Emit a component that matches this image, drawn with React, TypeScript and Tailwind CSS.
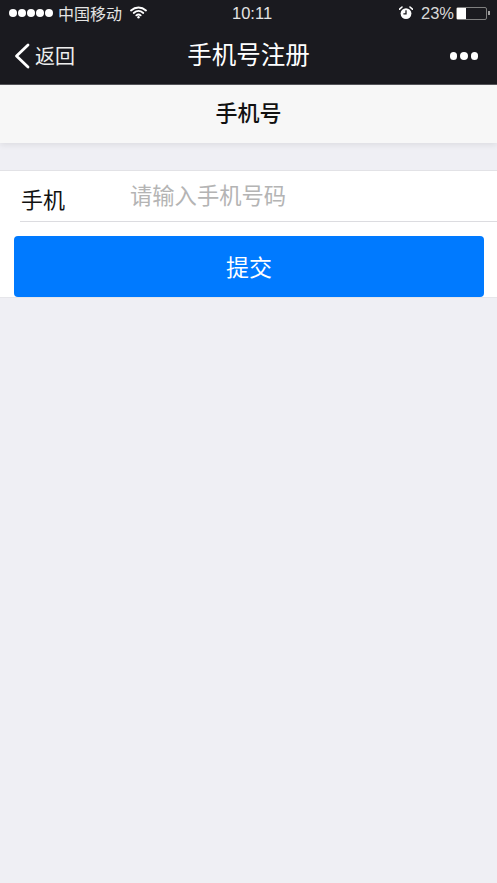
export default function App() {
  const font = "[font-family:'Noto_Sans_CJK_SC','Liberation_Sans',sans-serif]";
  return (
    <div className={`w-[497px] h-[883px] flex flex-col overflow-hidden bg-[#efeff4] ${font}`}>
      <header className="h-[85px] bg-[#1a1a1f] text-white flex flex-col shrink-0 border-b border-[#55555a]">
        <div className="h-[28px] relative flex items-center justify-between pl-[9px] pr-[7px] text-[#e4e4e4]">
          <div className="flex items-center -mt-[2px]">
            <div className="flex gap-[1px]">
              {[0, 1, 2, 3, 4].map((i) => (
                <span key={i} className="w-[8px] h-[8px] rounded-full bg-white" />
              ))}
            </div>
            <span className="ml-[5px] text-[16px] leading-[20px]">中国移动</span>
            <svg className="ml-[8px] -mt-[2px]" width="17" height="13" viewBox="0 0 17 13" fill="none" stroke="white" strokeLinecap="round">
              <path d="M1 4.5C5.5 .5 11.5 .5 16 4.5" strokeWidth="1.8" />
              <path d="M3.7 7C6.7 4.4 10.3 4.4 13.3 7" strokeWidth="1.8" />
              <path d="M6.3 9.4C7.6 8.3 9.4 8.3 10.7 9.4" strokeWidth="1.8" />
              <circle cx="8.5" cy="11.3" r="1.2" fill="white" stroke="none" />
            </svg>
          </div>
          <span className="absolute left-[232px] top-[2px] text-[16.5px] leading-[22px] font-['Liberation_Sans',sans-serif]">10:11</span>
          <div className="flex items-center -mt-[2px]">
            <svg width="14" height="14" viewBox="0 0 14 14" className="mr-[8px]">
              <circle cx="7" cy="7.6" r="5.4" fill="white" />
              <path d="M7 4.3V7.8H4.4" fill="none" stroke="#1a1a1f" strokeWidth="1.3" />
              <path d="M.6 3.2 3 1M13.4 3.2 11 1" stroke="white" strokeWidth="1.6" strokeLinecap="round" />
            </svg>
            <span className="text-[16.5px] leading-[20px] font-['Liberation_Sans',sans-serif] text-[#d8d8d8] mr-[2px]">23%</span>
            <div className="w-[31px] h-[13px] border border-[#808080] rounded-[2px]">
              <div className="h-full w-[9px] bg-white" />
            </div>
            <span className="w-[2px] h-[4px] bg-[#a0a0a0] ml-[1px]" />
          </div>
        </div>
        <nav className="h-[56px] relative flex items-center justify-between pl-[14px] pr-[19px]">
          <div className="flex items-center">
            <svg width="16" height="26" viewBox="0 0 16 26" fill="none" stroke="white" strokeWidth="2.8" strokeLinecap="round" strokeLinejoin="round">
              <path d="M14 2 2.5 13 14 24" />
            </svg>
            <span className="ml-[5px] text-[20px] leading-[28px] text-[#eeeeee]">返回</span>
          </div>
          <h1 className="absolute inset-x-0 top-[10px] text-center text-[24.5px] leading-[32px] font-normal">手机号注册</h1>
          <div className="flex gap-[3px]">
            {[0, 1, 2].map((i) => (
              <span key={i} className="w-[7.5px] h-[7.5px] rounded-full bg-white" />
            ))}
          </div>
        </nav>
      </header>
      <div className="h-[58px] shrink-0 bg-[#f7f7f7] flex items-center justify-center pb-[5px] text-[22px] font-medium text-[#111111] shadow-[0_2px_6px_rgba(0,0,0,0.08)]">
        手机号
      </div>
      <section className="mt-[27px] bg-white border-t border-b border-t-[#e2e2e6] border-b-[#e6e6ea] h-[128px] shrink-0">
        <div className="ml-[20px] h-[51px] border-b border-[#dcdce0] flex">
          <label className="w-[110px] pl-[1px] pt-[11px] text-[22px] leading-[32px] text-[#111111]">手机</label>
          <div className="pt-[7px] text-[22.3px] leading-[32px] text-[#b4b4b4]">请输入手机号码</div>
        </div>
        <button className="mt-[14px] ml-[14px] w-[470px] h-[61px] rounded-[4px] bg-[#007aff] text-white text-[23px] flex items-center justify-center">
          提交
        </button>
      </section>
    </div>
  );
}
